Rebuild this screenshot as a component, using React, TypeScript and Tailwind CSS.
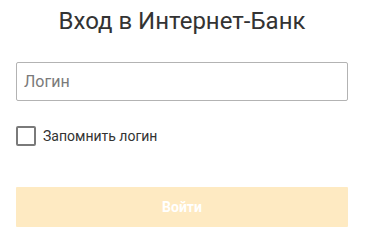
import React from "react";

export default function App() {
  return (
    <div className="w-[366px] h-[242px] bg-white font-['Roboto',sans-serif] overflow-hidden">
      <div className="w-[332px] ml-4 flex flex-col">
        <h1 className="mt-[6px] h-[30px] text-center text-[24px] leading-[30px] text-[#333333] font-normal">
          Вход в Интернет-Банк
        </h1>
        <div className="mt-[26px] h-[39px] border border-[#b3b3b3] rounded-[2px] flex items-center px-[7px]">
          <span className="text-[16px] text-[#7a7a7a]">Логин</span>
        </div>
        <div className="mt-[25px] flex items-center gap-[7px] h-[20px]">
          <div className="w-[20px] h-[20px] border-2 border-[#7a7a7a] rounded-[2px]" />
          <span className="text-[14px] text-[#333333]">Запомнить логин</span>
        </div>
        <button className="mt-[41px] h-[40px] bg-[#feeac2] text-white text-[14px] font-bold rounded-[1px]">
          Войти
        </button>
      </div>
    </div>
  );
}
